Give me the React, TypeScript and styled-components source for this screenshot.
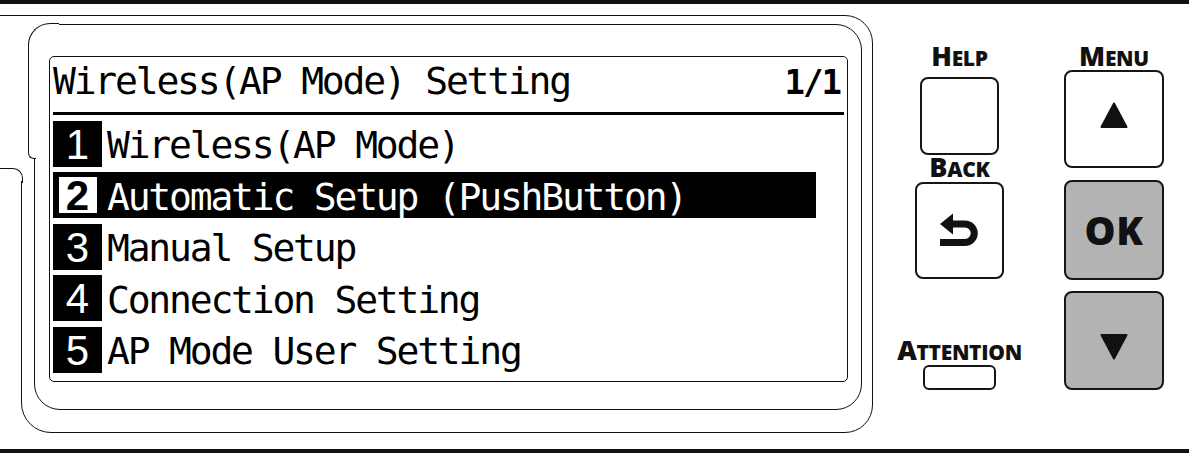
import styled, { createGlobalStyle } from "styled-components";

const GlobalStyle = createGlobalStyle`
  html, body {
    margin: 0;
    padding: 0;
    background: #fff;
  }
  * {
    box-sizing: border-box;
  }
`;

const Page = styled.div`
  width: 1189px;
  height: 454px;
  display: flex;
  flex-direction: column;
  background: #fff;
  overflow: hidden;
`;

const Rule = styled.div`
  flex: none;
  height: 4px;
  background: #111;
`;

const Main = styled.div`
  flex: none;
  height: 445px;
  display: flex;
`;

/* outer bezel: its top line runs off to the left edge, the left side starts lower */
const Bezel = styled.div`
  position: relative;
  margin: 11px 0 0 21px;
  width: 852px;
  height: 418px;
  border: 1.5px solid #111;
  border-radius: 0 28px 28px 30px;
  padding: 7.5px 10.5px 22.5px 11.5px;
  display: flex;

  &::before {
    content: "";
    position: absolute;
    left: -22.5px;
    top: -1.5px;
    width: 24px;
    height: 165px;
    background: #fff;
    border-top: 1.5px solid #111;
  }
  &::after {
    content: "";
    position: absolute;
    left: -22.5px;
    top: 151.5px;
    width: 22.5px;
    height: 14px;
    border-top: 1.5px solid #111;
    border-right: 1.5px solid #111;
    border-top-right-radius: 10px;
  }
`;

/* inner bezel with the small step on its left side */
const Frame = styled.div`
  position: relative;
  flex: 1;
  display: flex;
  border: 1.5px solid #111;
  border-radius: 17px 26px 26px 26px;
  padding: 31.5px 12.5px 26.5px 14.5px;

  &::before {
    content: "";
    position: absolute;
    left: -7px;
    top: -1.5px;
    width: 30px;
    height: 127px;
    background: #fff;
    border-top: 1.5px solid #111;
    border-left: 1.5px solid #111;
    border-top-left-radius: 22px;
  }
  &::after {
    content: "";
    position: absolute;
    left: -7px;
    top: 119.5px;
    width: 7px;
    height: 13.5px;
    background: #fff;
    border-left: 1.5px solid #111;
    border-bottom: 1.5px solid #111;
    border-bottom-left-radius: 6px;
  }
`;

const Lcd = styled.div`
  position: relative;
  z-index: 1;
  flex: 1;
  display: flex;
  flex-direction: column;
  border: 1.5px solid #111;
  border-radius: 5px;
  background: #fff;
  color: #000;
  font-family: "DejaVu Sans Mono", "Liberation Mono", monospace;
`;

const Header = styled.div`
  height: 55px;
  padding: 3px 7px 0 3px;
  display: flex;
  align-items: baseline;
  justify-content: space-between;
`;

const Title = styled.span`
  font-size: 38px;
  line-height: 42px;
  letter-spacing: -2.2px;
  white-space: pre;
`;

const PageNo = styled.span`
  font-size: 34px;
  font-weight: 700;
  line-height: 42px;
  letter-spacing: -2px;
`;

const Divider = styled.div`
  height: 3px;
  margin: 0 3px;
  background: #000;
`;

const List = styled.div`
  display: flex;
  flex-direction: column;
  gap: 5.5px;
  padding: 5.5px 3px 0;
`;

const Row = styled.div<{ $selected?: boolean }>`
  width: 763px;
  height: 46px;
  display: flex;
  align-items: center;
  background: ${(p) => (p.$selected ? "#000" : "transparent")};
  color: ${(p) => (p.$selected ? "#fff" : "#000")};
`;

const DigitCell = styled.div`
  flex: none;
  width: 49px;
  height: 46px;
  display: flex;
  align-items: center;
  justify-content: center;
  background: #000;
`;

const Digit = styled.span<{ $inverted?: boolean }>`
  width: 38px;
  height: 36px;
  display: flex;
  align-items: center;
  justify-content: center;
  padding-top: 2px;
  font-family: "Liberation Sans", Arial, sans-serif;
  font-size: 42px;
  line-height: 1;
  font-weight: ${(p) => (p.$inverted ? 700 : 400)};
  background: ${(p) => (p.$inverted ? "#fff" : "transparent")};
  color: ${(p) => (p.$inverted ? "#000" : "#fff")};
`;

const RowText = styled.span`
  margin-left: 5px;
  padding-top: 3.5px;
  font-size: 38px;
  line-height: 42px;
  letter-spacing: -2.2px;
  white-space: pre;
`;

const Controls = styled.div`
  display: flex;
  gap: 40px;
  margin-left: 22px;
`;

const Column = styled.div<{ $width: number }>`
  width: ${(p) => p.$width}px;
  display: flex;
  flex-direction: column;
  align-items: center;
`;

const Label = styled.div<{ $top: number }>`
  margin-top: ${(p) => p.$top}px;
  height: 22px;
  font-family: "Open Sans", "Noto Sans", sans-serif;
  font-weight: 800;
  font-size: 27px;
  line-height: 22px;
  letter-spacing: -0.3px;
  color: #111;
  white-space: nowrap;

  span {
    font-size: 21px;
    text-transform: uppercase;
  }
`;

const Key = styled.div<{ $top: number; $w: number; $h: number; $gray?: boolean; $radius?: number }>`
  margin-top: ${(p) => p.$top}px;
  width: ${(p) => p.$w}px;
  height: ${(p) => p.$h}px;
  flex: none;
  border: 2px solid #161616;
  border-radius: ${(p) => p.$radius ?? 8}px;
  background: ${(p) => (p.$gray ? "#b3b3b3" : "#fff")};
  display: flex;
  align-items: center;
  justify-content: center;
`;

const ArrowKey = styled(Key)<{ $shift: number }>`
  padding-top: ${(p) => (p.$shift > 0 ? p.$shift : 0)}px;
  padding-bottom: ${(p) => (p.$shift < 0 ? -p.$shift : 0)}px;
`;

const OkText = styled.span`
  font-family: "Open Sans", "Noto Sans", sans-serif;
  font-weight: 800;
  font-size: 39px;
  line-height: 1;
  letter-spacing: 0.5px;
  color: #111;
`;

const BackIcon = () => (
  <svg width="42" height="36" viewBox="0 0 42 36">
    <polygon points="1,12 14,1.5 14,22.5" fill="#111" />
    <path d="M13 12 H26 A9.25 9.25 0 0 1 26 30.5 H1" fill="none" stroke="#111" strokeWidth="7" />
  </svg>
);

const Triangle = ({ down }: { down?: boolean }) => (
  <svg width="28" height="27" viewBox="0 0 28 27">
    <polygon
      points={down ? "1.5,2 26.5,2 14,25.5" : "14,1.5 26.5,25 1.5,25"}
      fill="#111"
      stroke="#111"
      strokeWidth="2"
      strokeLinejoin="round"
    />
  </svg>
);

const items = [
  "Wireless(AP Mode)",
  "Automatic Setup (PushButton)",
  "Manual Setup",
  "Connection Setting",
  "AP Mode User Setting",
];

export default function App() {
  const selected = 1;
  return (
    <Page>
      <GlobalStyle />
      <Rule />
      <Main>
        <Bezel>
          <Frame>
            <Lcd>
              <Header>
                <Title>Wireless(AP Mode) Setting</Title>
                <PageNo>1/1</PageNo>
              </Header>
              <Divider />
              <List>
                {items.map((item, i) => (
                  <Row key={item} $selected={i === selected}>
                    <DigitCell>
                      <Digit $inverted={i === selected}>{i + 1}</Digit>
                    </DigitCell>
                    <RowText>{item}</RowText>
                  </Row>
                ))}
              </List>
            </Lcd>
          </Frame>
        </Bezel>
        <Controls>
          <Column $width={129}>
            <Label $top={40.8}>
              H<span>elp</span>
            </Label>
            <Key $top={10.2} $w={79} $h={78} />
            <Label $top={0.8}>
              B<span>ack</span>
            </Label>
            <Key $top={4.2} $w={89} $h={97}>
              <BackIcon />
            </Key>
            <Label $top={59.8}>
              A<span>ttention</span>
            </Label>
            <Key $top={4.2} $w={73} $h={25} $radius={6} />
          </Column>
          <Column $width={100}>
            <Label $top={40.8}>
              M<span>enu</span>
            </Label>
            <ArrowKey $top={3.2} $w={100} $h={98} $shift={-7}>
              <Triangle />
            </ArrowKey>
            <Key $top={12} $w={100} $h={100} $gray>
              <OkText>OK</OkText>
            </Key>
            <ArrowKey $top={11} $w={100} $h={99} $gray $shift={12}>
              <Triangle down />
            </ArrowKey>
          </Column>
        </Controls>
      </Main>
      <Rule />
    </Page>
  );
}
